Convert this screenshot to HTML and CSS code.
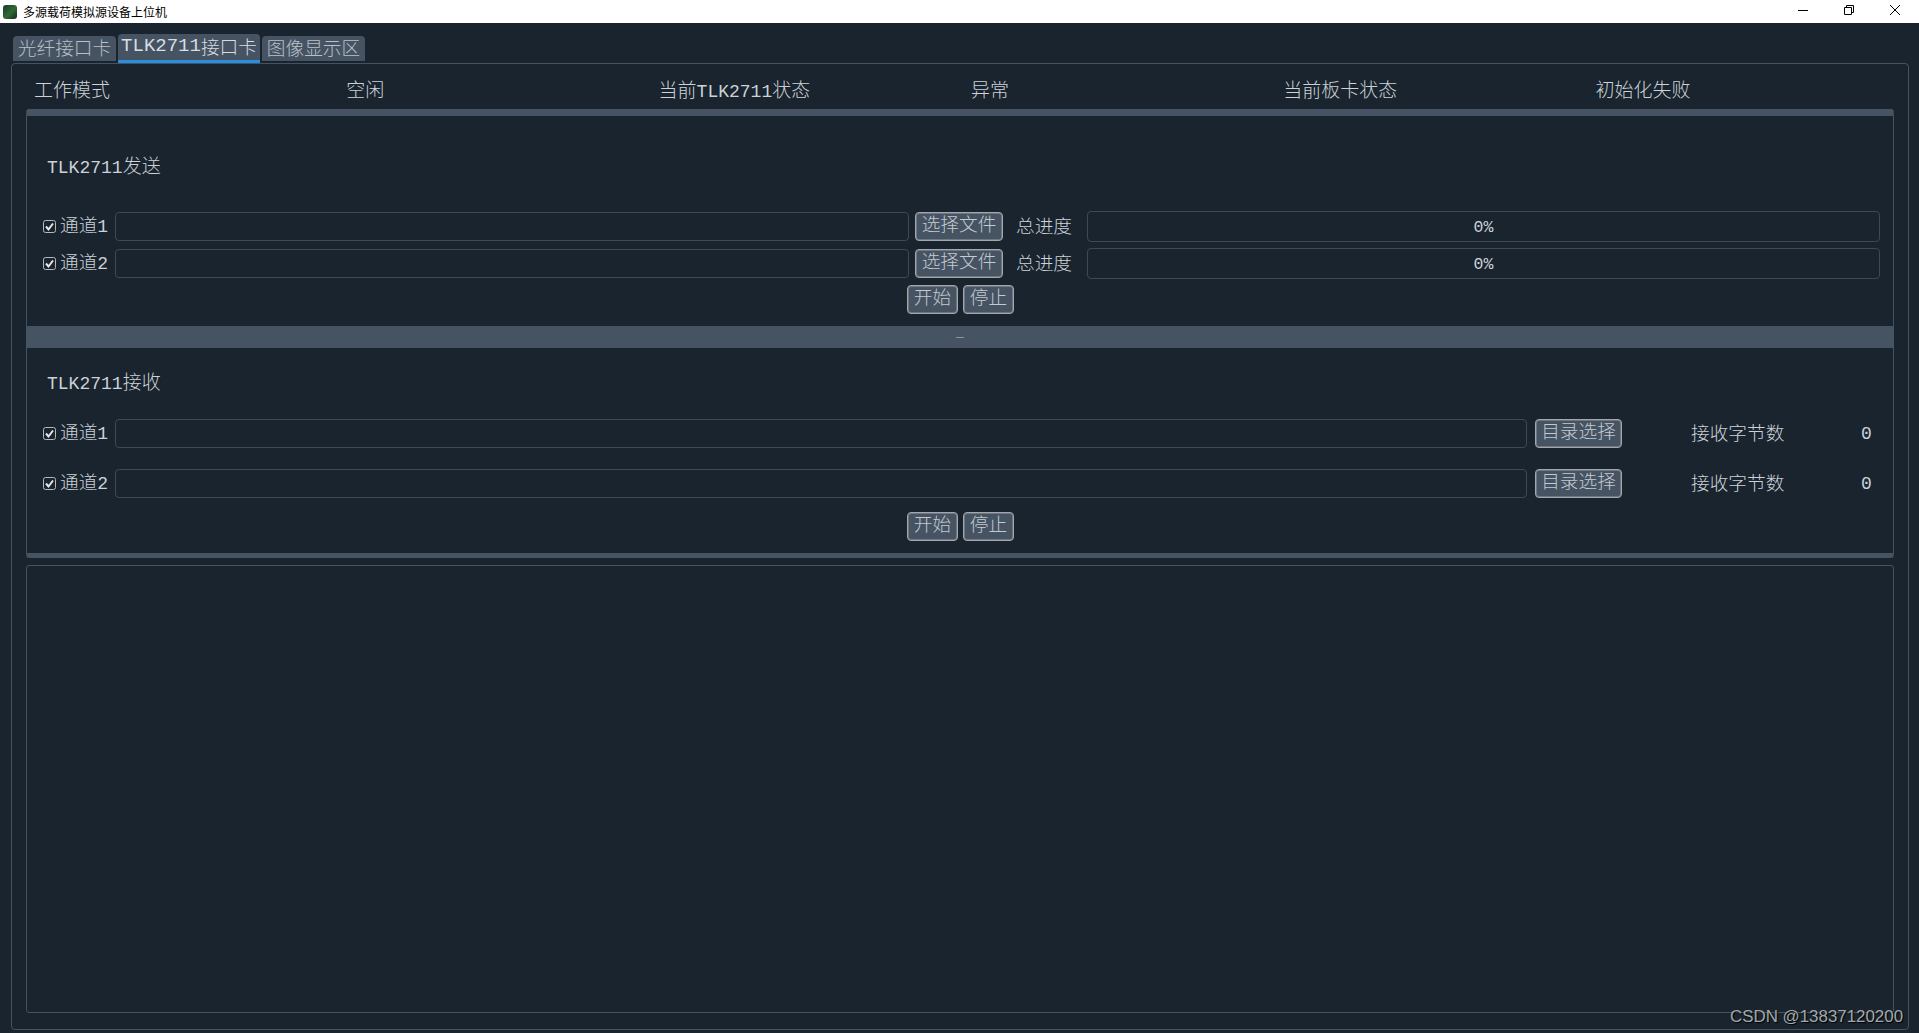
FILE: index.html
```html
<!DOCTYPE html>
<html lang="zh">
<head>
<meta charset="utf-8">
<title>多源载荷模拟源设备上位机</title>
<link rel="stylesheet" href="styles.css">
</head>
<body>
<div class="app">
  <header class="titlebar">
    <span class="app-icon"></span>
    <span class="app-title">多源载荷模拟源设备上位机</span>
    <div class="win-controls">
      <span class="win-btn"><svg width="12" height="12" viewBox="0 0 12 12"><path d="M1 6.500h10" stroke="#000" fill="none"/></svg></span>
      <span class="win-btn"><svg width="12" height="12" viewBox="0 0 12 12"><path d="M1.500 3.500h7v7h-7zM3.500 3.500v-2h7v7h-2" stroke="#000" fill="none"/></svg></span>
      <span class="win-btn"><svg width="12" height="12" viewBox="0 0 12 12"><path d="M1 1l10 10M11 1L1 11" stroke="#000" fill="none"/></svg></span>
    </div>
  </header>

  <nav class="tabbar">
    <div class="tab">光纤接口卡</div>
    <div class="tab tab-active"><span class="latin">TLK2711</span>接口卡</div>
    <div class="tab">图像显示区</div>
  </nav>

  <main class="pane">
    <div class="status-row">
      <span>工作模式</span><span>空闲</span><span>当前<span class="latin">TLK2711</span>状态</span><span>异常</span><span>当前板卡状态</span><span>初始化失败</span>
    </div>

    <section class="group group-send">
      <h2 class="group-title title-send"><span class="latin">TLK2711</span>发送</h2>
      <div class="row row-first-send">
        <label class="check"><svg class="check-box" width="13" height="13" viewBox="0 0 13 13"><rect x=".5" y=".5" width="12" height="12" rx="2" fill="#19242e" stroke="#b4b9be"/><path d="M3 6.500l2.500 3L10 3.500" fill="none" stroke="#e6e9ec" stroke-width="2"/></svg><span>通道<span class="latin">1</span></span></label>
        <div class="field"></div>
        <button class="btn btn-file">选择文件</button>
        <span class="progress-label">总进度</span>
        <div class="progress">0%</div>
      </div>
      <div class="row row-second-send">
        <label class="check"><svg class="check-box" width="13" height="13" viewBox="0 0 13 13"><rect x=".5" y=".5" width="12" height="12" rx="2" fill="#19242e" stroke="#b4b9be"/><path d="M3 6.500l2.500 3L10 3.500" fill="none" stroke="#e6e9ec" stroke-width="2"/></svg><span>通道<span class="latin">2</span></span></label>
        <div class="field"></div>
        <button class="btn btn-file">选择文件</button>
        <span class="progress-label">总进度</span>
        <div class="progress">0%</div>
      </div>
      <div class="actions actions-send">
        <button class="btn btn-action">开始</button>
        <button class="btn btn-action">停止</button>
      </div>
    </section>

    <div class="splitter"><span class="splitter-grip"></span></div>

    <section class="group group-recv">
      <h2 class="group-title title-recv"><span class="latin">TLK2711</span>接收</h2>
      <div class="row row-first-recv">
        <label class="check"><svg class="check-box" width="13" height="13" viewBox="0 0 13 13"><rect x=".5" y=".5" width="12" height="12" rx="2" fill="#19242e" stroke="#b4b9be"/><path d="M3 6.500l2.500 3L10 3.500" fill="none" stroke="#e6e9ec" stroke-width="2"/></svg><span>通道<span class="latin">1</span></span></label>
        <div class="field"></div>
        <button class="btn btn-dir">目录选择</button>
        <span class="recv-label">接收字节数</span>
        <span class="recv-value">0</span>
      </div>
      <div class="row row-second-recv">
        <label class="check"><svg class="check-box" width="13" height="13" viewBox="0 0 13 13"><rect x=".5" y=".5" width="12" height="12" rx="2" fill="#19242e" stroke="#b4b9be"/><path d="M3 6.500l2.500 3L10 3.500" fill="none" stroke="#e6e9ec" stroke-width="2"/></svg><span>通道<span class="latin">2</span></span></label>
        <div class="field"></div>
        <button class="btn btn-dir">目录选择</button>
        <span class="recv-label">接收字节数</span>
        <span class="recv-value">0</span>
      </div>
      <div class="actions actions-recv">
        <button class="btn btn-action">开始</button>
        <button class="btn btn-action">停止</button>
      </div>
    </section>

    <div class="log"></div>
  </main>

  <div class="watermark">CSDN @13837120200</div>
</div>
</body>
</html>
```
FILE: styles.css
```css
* { box-sizing: border-box; }
html, body { margin: 0; padding: 0; height: 100%; overflow: hidden; }
body {
  background: #19242e;
  color: #ccd2d8;
  font-family: "Liberation Mono", "Noto Sans CJK SC", monospace;
  font-size: 18.670px;
  font-weight: 300;
}
.latin { font-size: 18px; font-weight: 400; }
.app { position: relative; width: 1919px; height: 1033px; display: flex; flex-direction: column; }

.titlebar { height: 23px; background: #fff; display: flex; align-items: center; padding-left: 3px; color: #000; }
.app-icon { width: 14px; height: 14px; border-radius: 3px; background: linear-gradient(135deg, #1b3a20, #2f6a35 55%, #14261a); }
.app-title { margin-left: 6px; font-family: "Noto Sans CJK SC", sans-serif; font-size: 12px; font-weight: 400; }
.win-controls { margin-left: auto; padding-right: 1px; display: flex; }
.win-btn { width: 46px; height: 23px; display: flex; align-items: center; justify-content: center; padding-bottom: 3px; }

.tabbar { height: 40px; padding-left: 13px; display: flex; align-items: flex-end; gap: 2px; }
.tab { width: 103px; height: 25px; margin-bottom: 2px; padding-bottom: 3px; background: #465362; border-radius: 4px 4px 0 0; display: flex; align-items: center; justify-content: center; color: #b8c0c8; white-space: nowrap; }
.tab-active { width: 142px; height: 29px; margin-bottom: 0; padding-bottom: 2px; border-bottom: 3px solid #2a8ddd; color: #d8dde2; }
.tab .latin { font-size: 19px; }

.pane { width: 1898px; height: 967px; margin-left: 11px; padding: 0 14px; border: 1px solid #45525f; border-radius: 4px; }

.status-row { height: 45px; padding: 4px 0 0 8px; display: grid; grid-template-columns: repeat(6, 312.300px); align-items: center; font-size: 19px; }

.group { display: flow-root; border: 1px solid #45525f; border-radius: 3px 3px 0 0; padding: 0 13px 0 16px; }
.group-send { height: 218px; border-top: 7px solid #465362; }
.group-recv { height: 210px; border-top: 0; border-bottom: 5px solid #465362; border-radius: 0 0 3px 3px; }
.group-title { margin: 0 0 0 4px; height: 24px; line-height: 24px; font-size: 19px; font-weight: 300; position: relative; top: 1px; }
.title-send { margin-top: 39px; }
.title-recv { margin-top: 23px; }

.row { height: 29px; display: flex; align-items: center; }
.row-first-send { margin-top: 33px; }
.row-second-send { margin-top: 8px; }
.row-first-recv { margin-top: 24px; }
.row-second-recv { margin-top: 21px; }

.check { width: 72px; flex: none; display: flex; align-items: center; gap: 4px; line-height: 26px; }
.check-box { flex: none; }
.field { flex: 1; height: 29px; border: 1px solid #3c4a58; border-radius: 4px; }

.btn { height: 29px; padding: 0 0 1px; font: inherit; line-height: 20px; color: #c2cad2; background: #465362; border: 1px solid #a3a7ab; border-radius: 4px; box-shadow: inset 0 0 0 1px #6f7882; }
.btn-file { width: 88px; margin-left: 6px; }
.btn-dir { width: 87px; margin-left: 8px; }
.btn-action { width: 51px; }

.progress-label { width: 84px; flex: none; padding: 0 0 3px 13px; }
.progress { width: 793px; flex: none; height: 31px; border: 1px solid #3c4a58; border-radius: 4px; display: flex; align-items: center; justify-content: center; font-size: 16.500px; font-weight: 400; padding-top: 2px; }

.recv-label { width: 170px; flex: none; margin-left: 69px; padding-bottom: 3px; }
.recv-value { width: 10px; flex: none; margin-right: 9px; text-align: right; font-size: 18px; font-weight: 400; padding-top: 1px; }

.actions { display: flex; justify-content: center; gap: 5px; padding-right: 2px; }
.actions-send { margin-top: 7px; }
.actions-recv { margin-top: 14px; }

.splitter { height: 21px; background: #465362; display: flex; align-items: center; justify-content: center; }
.splitter-grip { width: 8px; height: 1px; background: #8a939c; }

.log { height: 448px; margin-top: 7px; border: 1px solid #45525f; border-radius: 3px; }

.watermark { position: absolute; left: 1730px; top: 1007px; font-family: "Liberation Sans", sans-serif; font-size: 16.900px; font-weight: 400; line-height: 20px; color: #a4a8ac; text-shadow: 1px 1px 1px #000; }
```
